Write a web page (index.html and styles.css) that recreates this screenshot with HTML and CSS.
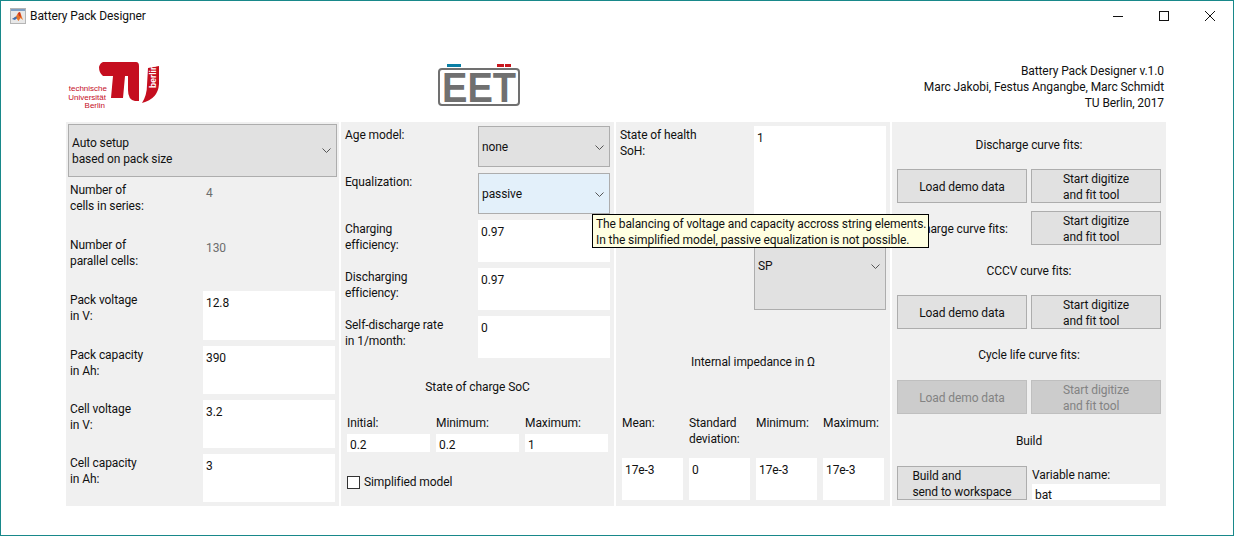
FILE: index.html
```html
<!DOCTYPE html>
<html lang="en">
<head>
  <meta charset="UTF-8" />
  <title>Battery Pack Designer</title>
  <link rel="stylesheet" href="styles.css">
</head>
<body>
<div class="window">

  <div class="titlebar">
    <svg class="app-icon" width="16" height="16" viewBox="0 0 16 16">
      <rect x="0.5" y="0.5" width="15" height="15" fill="#e8e8e8" stroke="#b5b5b5"/>
      <rect x="1" y="1" width="14" height="2" fill="#7f9fc4"/>
      <path d="M2 11 L6 8.5 L8 5 L10 4 L13 12 L10.5 10 L8.5 13 L6.5 10.5 Z" fill="#e8742a"/>
      <path d="M2 11 L6 8.5 L7 10 L5 12 Z" fill="#3b6fb5"/>
      <path d="M8 5 L10 4 L11 9 L9 8 Z" fill="#c9331f"/>
    </svg>
    <span class="title">Battery Pack Designer</span>
    <div class="winbtns">
      <span class="winbtn"><svg width="12" height="12" viewBox="0 0 12 12"><path d="M1 6.5 H11" stroke="#111"/></svg></span>
      <span class="winbtn"><svg width="12" height="12" viewBox="0 0 12 12"><rect x="1.5" y="1.5" width="9" height="9" fill="none" stroke="#111"/></svg></span>
      <span class="winbtn"><svg width="12" height="12" viewBox="0 0 12 12"><path d="M1 1 L11 11 M11 1 L1 11" stroke="#111"/></svg></span>
    </div>
  </div>

  <div class="header">
    <svg class="logo-tu" width="110" height="60" viewBox="60 55 110 60">
      <path d="M102 62 H135 Q138 62 138 66 V101 H134 Q127 100 127 90 V76 H102 Q98 73 98 67 Q99 63 102 62 Z" fill="#c50e1f"/>
      <path d="M112 76 H124 L122 98 H110 Z" fill="#c50e1f"/>
      <path d="M147 68 L158 66 V84 Q157 99 141 103 Q146 95 146 85 Z" fill="#c50e1f"/>
      <text class="tu-berlin" transform="translate(155 88) rotate(-90)">berlin</text>
      <text class="tu-name" x="106" y="91">technische</text>
      <text class="tu-name" x="105" y="100">Universität</text>
      <text class="tu-name" x="104" y="108">Berlin</text>
    </svg>
    <svg class="logo-eet" width="84" height="52" viewBox="437 62 84 52">
      <rect x="447" y="64" width="14" height="3" fill="#0a7fa5"/>
      <rect x="497" y="64" width="7" height="3" fill="#c8171e"/>
      <rect x="505" y="64" width="6" height="3" fill="#c8171e"/>
      <rect x="439" y="69" width="80" height="36" rx="3" fill="none" stroke="#707070" stroke-width="2"/>
      <text class="eet-text" x="442" y="102" textLength="74" lengthAdjust="spacingAndGlyphs">EET</text>
    </svg>
    <div class="about">
      Battery Pack Designer v.1.0<br>
      Marc Jakobi, Festus Angangbe, Marc Schmidt<br>
      TU Berlin, 2017
    </div>
  </div>

  <div class="panels">

    <section class="panel pack">
      <div class="combo combo-auto">
        <span>Auto setup<br>based on pack size</span>
        <svg class="chev" width="9" height="5" viewBox="0 0 9 5"><path d="M0.5 0.5 L4.5 4.5 L8.5 0.5" fill="none" stroke="#555"/></svg>
      </div>
      <div class="pack-rows">
        <div class="row"><label class="lab">Number of<br>cells in series:</label><span class="value">4</span></div>
        <div class="row"><label class="lab">Number of<br>parallel cells:</label><span class="value">130</span></div>
        <div class="row"><label class="lab">Pack voltage<br>in V:</label><div class="field">12.8</div></div>
        <div class="row"><label class="lab">Pack capacity<br>in Ah:</label><div class="field">390</div></div>
        <div class="row"><label class="lab">Cell voltage<br>in V:</label><div class="field">3.2</div></div>
        <div class="row"><label class="lab">Cell capacity<br>in Ah:</label><div class="field">3</div></div>
      </div>
    </section>

    <section class="panel model">
      <div class="model-rows">
        <div class="row"><label class="lab">Age model:</label>
          <div class="combo"><span>none</span><svg class="chev" width="9" height="5" viewBox="0 0 9 5"><path d="M0.5 0.5 L4.5 4.5 L8.5 0.5" fill="none" stroke="#555"/></svg></div>
        </div>
        <div class="row"><label class="lab">Equalization:</label>
          <div class="combo combo-hover"><span>passive</span><svg class="chev" width="9" height="5" viewBox="0 0 9 5"><path d="M0.5 0.5 L4.5 4.5 L8.5 0.5" fill="none" stroke="#555"/></svg></div>
        </div>
        <div class="row"><label class="lab">Charging<br>efficiency:</label><div class="field">0.97</div></div>
        <div class="row"><label class="lab">Discharging<br>efficiency:</label><div class="field">0.97</div></div>
        <div class="row"><label class="lab">Self-discharge rate<br>in 1/month:</label><div class="field">0</div></div>
      </div>
      <h4 class="heading soc-heading">State of charge SoC</h4>
      <div class="soc-grid">
        <span>Initial:</span><span>Minimum:</span><span>Maximum:</span>
        <div class="field field-small">0.2</div><div class="field field-small">0.2</div><div class="field field-small">1</div>
      </div>
      <div class="check"><span class="checkbox"></span>Simplified model</div>
    </section>

    <section class="panel health">
      <div class="health-rows">
        <label class="lab">State of health<br>SoH:</label><div class="field">1</div>
        <span></span>
        <div class="combo"><span>SP</span><svg class="chev" width="9" height="5" viewBox="0 0 9 5"><path d="M0.5 0.5 L4.5 4.5 L8.5 0.5" fill="none" stroke="#555"/></svg></div>
      </div>
      <h4 class="heading imp-heading">Internal impedance in Ω</h4>
      <div class="imp-grid">
        <span>Mean:</span><span>Standard<br>deviation:</span><span>Minimum:</span><span>Maximum:</span>
        <div class="field">17e-3</div><div class="field">0</div><div class="field">17e-3</div><div class="field">17e-3</div>
      </div>
    </section>

    <section class="panel fits">
      <h4 class="heading first">Discharge curve fits:</h4>
      <div class="btn-row">
        <button class="btn">Load demo data</button>
        <button class="btn btn-lines"><span>Start digitize<br>and fit tool</span></button>
      </div>
      <div class="btn-row second">
        <h4 class="heading">Charge curve fits:</h4>
        <button class="btn btn-lines"><span>Start digitize<br>and fit tool</span></button>
      </div>
      <h4 class="heading">CCCV curve fits:</h4>
      <div class="btn-row">
        <button class="btn">Load demo data</button>
        <button class="btn btn-lines"><span>Start digitize<br>and fit tool</span></button>
      </div>
      <h4 class="heading">Cycle life curve fits:</h4>
      <div class="btn-row low">
        <button class="btn" disabled>Load demo data</button>
        <button class="btn btn-lines" disabled><span>Start digitize<br>and fit tool</span></button>
      </div>
      <h4 class="heading build-heading">Build</h4>
      <div class="btn-row low">
        <button class="btn btn-lines"><span>Build and<br>send to workspace</span></button>
        <div class="varname">
          <label>Variable name:</label>
          <div class="field field-var">bat</div>
        </div>
      </div>
    </section>

  </div>

  <div class="tooltip">The balancing of voltage and capacity accross string elements.<br>In the simplified model, passive equalization is not possible.</div>
</div>
</body>
</html>
```

FILE: styles.css
```css
* {
  box-sizing: border-box;
}

body {
  margin: 0;
  font-family: Roboto, "Open Sans", sans-serif;
  font-size: 12px;
  line-height: 16px;
  letter-spacing: -0.09px;
  color: #111;
  background-color: #fff;
}

.window {
  position: relative;
  width: 1234px;
  height: 536px;
  border: 1px solid #18888a;
  overflow: hidden;
}

/* title bar */
.titlebar {
  display: flex;
  align-items: center;
  height: 29px;
  padding-left: 9px;
}

.title {
  margin-left: 4px;
  padding-top: 1px;
}

.winbtns {
  display: flex;
  margin-left: auto;
}

.winbtn {
  display: flex;
  align-items: center;
  justify-content: center;
  width: 46px;
  height: 29px;
}

/* header */
.header {
  display: grid;
  grid-template-columns: 376px auto 1fr;
  height: 92px;
  padding: 0 69px 0 60px;
}

.logo-tu {
  margin-top: 25px;
}

.logo-eet {
  margin-top: 32px;
}

.about {
  margin-top: 33px;
  text-align: right;
}

.tu-name {
  font-family: "Liberation Sans", sans-serif;
  font-size: 8px;
  letter-spacing: 0;
  fill: #c50e1f;
  text-anchor: end;
}

.tu-berlin {
  font-family: "Liberation Sans", sans-serif;
  font-size: 8.5px;
  font-weight: bold;
  letter-spacing: 0;
  fill: #fff;
}

.eet-text {
  font-family: "Liberation Sans", sans-serif;
  font-size: 42px;
  font-weight: bold;
  letter-spacing: 0;
  fill: #707070;
}

/* panels */
.panels {
  display: grid;
  grid-template-columns: 273px 273px 274px 274px;
  gap: 2px;
  height: 384px;
  margin-left: 65px;
}

.panel {
  background-color: #f0f0f0;
}

.row {
  display: grid;
  grid-template-columns: 133px 132px;
}

.lab {
  padding-top: 1px;
}

.value {
  padding: 4px 0 0 3px;
  color: #6d6d6d;
}

.field {
  padding: 4px 3px 0;
  background-color: #fff;
  overflow: hidden;
}

.field-small {
  height: 18px;
  padding-top: 3px;
}

.combo {
  display: flex;
  align-items: center;
  justify-content: space-between;
  padding: 0 5px 0 3px;
  background-color: #e1e1e1;
  border: 1px solid #adadad;
}

.combo-hover {
  background-color: #e3f0fa;
}

.heading {
  margin: 0;
  font-weight: normal;
  text-align: center;
}

/* first column */
.pack {
  padding: 2px;
}

.combo-auto {
  height: 53px;
}

.pack-rows {
  display: grid;
  grid-template-rows: 55px 55px 55px 54px 54px 48px;
  margin-top: 4px;
  padding-left: 2px;
}

.pack-rows .field {
  margin-bottom: 6px;
}

.pack-rows .row:last-child .field {
  margin-bottom: 0;
}

/* second column */
.model {
  padding: 4px 4px 0;
}

.model-rows {
  display: grid;
  grid-template-rows: 41px 41px 42px 42px 42px;
  gap: 6px;
}

.model-rows .combo {
  padding-top: 1px;
}

.soc-heading {
  margin-top: 21px;
}

.soc-grid {
  display: grid;
  grid-template-columns: repeat(3, 83px);
  grid-template-rows: 19px 18px;
  column-gap: 6px;
  margin: 20px 0 0 2px;
}

.check {
  display: flex;
  align-items: center;
  margin: 22px 0 0 2px;
}

.checkbox {
  width: 13px;
  height: 13px;
  margin-right: 4px;
  border: 1px solid #333;
  background-color: #fff;
}

/* third column */
.health {
  padding: 4px 4px 0;
}

.health-rows {
  display: grid;
  grid-template-columns: 134px 132px;
  grid-template-rows: 90px 88px;
  row-gap: 6px;
}

.imp-heading {
  margin-top: 44px;
}

.imp-grid {
  display: grid;
  grid-template-columns: repeat(4, 61px);
  grid-template-rows: 43px 42px;
  column-gap: 6px;
  margin: 45px 0 0 2px;
}

/* fourth column */
.fits {
  padding: 0 5px;
}

.fits .heading {
  margin-top: 18px;
}

.fits .heading.first {
  margin-top: 15px;
}

.fits .heading.build-heading {
  margin-top: 19px;
}

.btn-row {
  display: grid;
  grid-template-columns: 130px 130px;
  grid-template-rows: 34px;
  column-gap: 4px;
  margin-top: 16px;
}

.btn-row.second {
  margin-top: 8px;
}

.btn-row.second .heading {
  align-self: center;
  margin-top: 2px;
}

.btn-row.low {
  margin-top: 17px;
}

.btn {
  height: 34px;
  padding: 2px 0 0;
  font: inherit;
  letter-spacing: inherit;
  color: #111;
  background-color: #e1e1e1;
  border: 1px solid #adadad;
}

.btn-lines {
  padding-top: 1px;
}

.btn span {
  display: inline-block;
  text-align: left;
}

.btn:disabled {
  color: #838383;
  background-color: #cccccc;
  border-color: #bfbfbf;
}

.varname {
  padding-left: 1px;
}

.varname label {
  display: block;
  height: 18px;
  padding-top: 1px;
}

.field-var {
  width: 128px;
  height: 16px;
  padding-top: 3px;
}

/* tooltip over the form */
.tooltip {
  position: absolute;
  left: 591px;
  top: 213px;
  width: 337px;
  height: 34px;
  padding: 1px 3px 0;
  background-color: #ffffe1;
  border: 1px solid #000;
  white-space: nowrap;
}
```
